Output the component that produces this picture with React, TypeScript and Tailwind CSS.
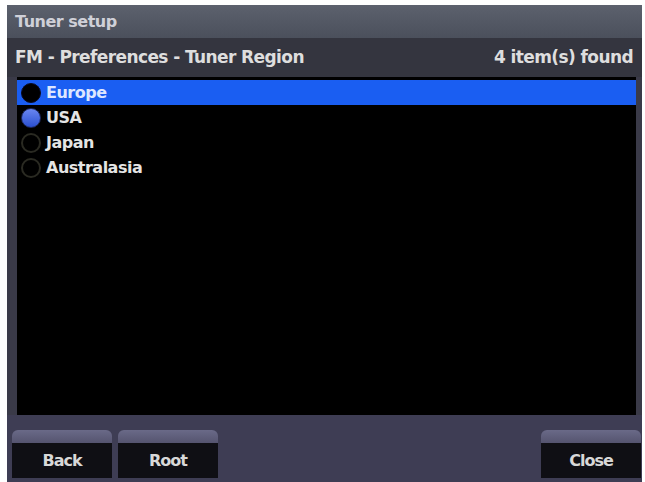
import React from "react";

const font = { fontFamily: '"DejaVu Sans", "Liberation Sans", sans-serif' };

function Radio({ state }: { state: "black" | "blue" | "empty" }) {
  if (state === "black")
    return <div className="h-[20px] w-[20px] shrink-0 rounded-full bg-black border border-[#0a0a20]" />;
  if (state === "blue")
    return (
      <div className="h-[20px] w-[20px] shrink-0 rounded-full bg-gradient-to-b from-[#6a86f0] to-[#2b4fd0] border border-[#1e2a60]" />
    );
  return <div className="h-[20px] w-[20px] shrink-0 rounded-full bg-black border-2 border-[#2a2a22]" />;
}

function Btn({ label }: { label: string }) {
  return (
    <div className="flex h-[48px] w-[100px] flex-col overflow-hidden rounded-t-[6px]">
      <div className="h-[13px] bg-gradient-to-b from-[#6a6a88] to-[#55546f]" />
      <div className="flex flex-1 items-center justify-center bg-[#0f0f14] text-[16px] font-bold tracking-[-1px] text-[#d8d8d8]">
        {label}
      </div>
    </div>
  );
}

export default function App() {
  const rows: { name: string; state: "black" | "blue" | "empty" }[] = [
    { name: "Europe", state: "black" },
    { name: "USA", state: "blue" },
    { name: "Japan", state: "empty" },
    { name: "Australasia", state: "empty" },
  ];
  return (
    <div className="h-[482px] w-[645px] bg-white pl-[7px] pt-[5px]" style={font}>
      <div className="flex h-[477px] w-[635px] flex-col bg-[#3a3a4a]">
        <div className="flex h-[33px] items-center bg-gradient-to-b from-[#5c616d] to-[#4b505c] pl-[8px] text-[16px] font-bold tracking-[-0.5px] text-[#cfd0d8]">
          Tuner setup
        </div>
        <div className="flex h-[39px] items-center justify-between bg-[#34353f] pl-[8px] pr-[9px] text-[17px] font-bold tracking-[-0.6px] text-[#dedede]">
          <span>FM - Preferences - Tuner Region</span>
          <span>4 item(s) found</span>
        </div>
        <div className="flex h-[338px] bg-[#3a3a48] pl-[10px] pr-[6px]">
          <div className="flex flex-1 flex-col bg-black pt-[3px]">
            {rows.map((r, i) => (
              <div
                key={r.name}
                className={`flex h-[25px] items-center gap-[5px] pl-[4px] text-[16px] font-bold tracking-[-0.5px] ${
                  i === 0 ? "bg-[#1a5ef2] text-[#dde6ff]" : "text-[#e4e4e4]"
                }`}
              >
                <Radio state={r.state} />
                <span>{r.name}</span>
              </div>
            ))}
          </div>
        </div>
        <div className="flex flex-1 items-start justify-between bg-[#3e3d54] pl-[5px] pr-[1px] pt-[15px]">
          <div className="flex gap-[6px]">
            <Btn label="Back" />
            <Btn label="Root" />
          </div>
          <Btn label="Close" />
        </div>
      </div>
    </div>
  );
}
